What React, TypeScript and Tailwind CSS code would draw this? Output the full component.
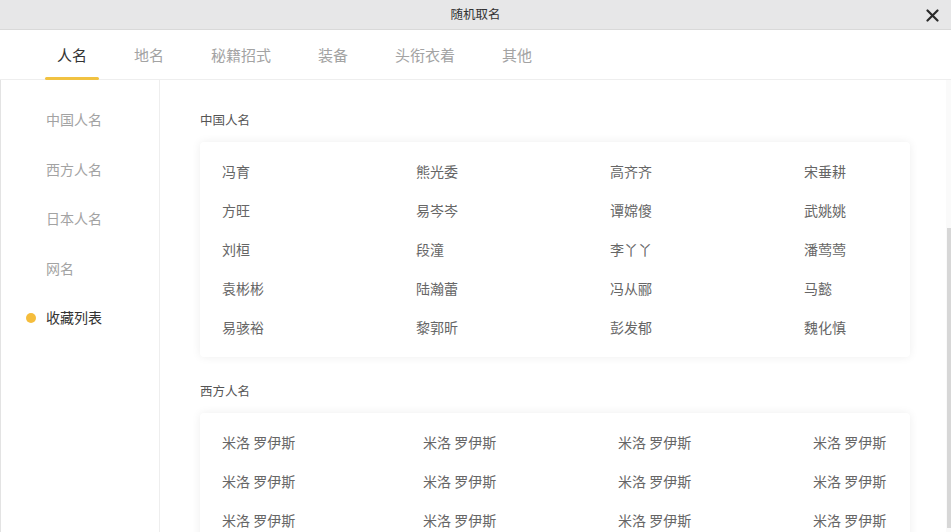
import React from "react";

const tabs = ["人名", "地名", "秘籍招式", "装备", "头衔衣着", "其他"];
const sideItems = ["中国人名", "西方人名", "日本人名", "网名", "收藏列表"];
const cnNames = [
  ["冯育", "熊光委", "高齐齐", "宋垂耕"],
  ["方旺", "易岑岑", "谭嫦傻", "武姚姚"],
  ["刘桓", "段潼", "李丫丫", "潘莺莺"],
  ["袁彬彬", "陆瀚蕾", "冯从郦", "马懿"],
  ["易骇裕", "黎郭昕", "彭发郁", "魏化慎"],
];
const westRows = [0, 1, 2, 3];

export default function App() {
  return (
    <div
      className="w-[951px] h-[532px] overflow-hidden bg-white flex flex-col text-[#333]"
      style={{ fontFamily: '"Noto Sans CJK SC", "Noto Sans", sans-serif' }}
    >
      {/* title bar */}
      <div className="h-[30px] shrink-0 bg-[#e7e7e8] border-b border-[#d9d9d9] flex items-center relative">
        <div className="flex-1 text-center text-[12.5px] text-[#333] leading-none">随机取名</div>
        <div className="absolute right-[12px] top-[8.5px] w-[13px] h-[13px]">
          <svg viewBox="0 0 13 13" width="13" height="13">
            <path d="M1.5 1.5 L11.5 11.5 M11.5 1.5 L1.5 11.5" stroke="#2b2b2b" strokeWidth="2.2" strokeLinecap="round" />
          </svg>
        </div>
      </div>

      {/* tabs */}
      <div className="h-[50px] shrink-0 border-b border-[#eeeeee] flex pl-[45px] gap-[23px]">
        {tabs.map((t, i) => (
          <div
            key={t}
            className={
              "relative h-full flex items-center pt-[2px] px-[12px] text-[15px] " +
              (i === 0 ? "text-[#333]" : "text-[#a3a3a3]")
            }
          >
            {t}
            {i === 0 && (
              <div className="absolute left-0 right-0 bottom-[-1px] h-[3px] rounded-[2px] bg-[#f1c241]" />
            )}
          </div>
        ))}
      </div>

      {/* body */}
      <div className="flex-1 flex min-h-0">
        <div className="w-[160px] shrink-0 border-r border-[#eeeeee] border-l border-l-[#e3e3e3] pt-[15px]">
          {sideItems.map((s, i) => (
            <div key={s} className="h-[49.5px] flex items-center pl-[25px]">
              <div className="w-[20px] flex items-center">
                {i === 4 && <div className="w-[10px] h-[10px] rounded-full bg-[#f5bd3c]" />}
              </div>
              <span className={"text-[14px] " + (i === 4 ? "text-[#333]" : "text-[#a3a3a3]")}>{s}</span>
            </div>
          ))}
        </div>

        <div className="flex-1 relative overflow-hidden pl-[40px] pt-[30px]">
          <div className="w-[710px]">
            <div className="h-[20px] flex items-center text-[12.5px] text-[#555] mb-[12px]">中国人名</div>
            <div className="bg-white rounded-[4px] shadow-[0_0_10px_rgba(0,0,0,0.07)] px-[22px] py-[10px]">
              {cnNames.map((row, ri) => (
                <div key={ri} className="h-[39px] grid grid-cols-[194px_194px_194px_84px] items-center">
                  {row.map((n) => (
                    <div key={n} className="text-[14px] text-[#666]">{n}</div>
                  ))}
                </div>
              ))}
            </div>

            <div className="h-[20px] flex items-center text-[12.5px] text-[#555] mt-[24px] mb-[12px]">西方人名</div>
            <div className="bg-white rounded-[4px] shadow-[0_0_10px_rgba(0,0,0,0.07)] px-[22px] py-[10px]">
              {westRows.map((r) => (
                <div key={r} className="h-[39px] grid grid-cols-[201px_195px_195px_75px] items-center">
                  {[0, 1, 2, 3].map((c) => (
                    <div key={c} className="text-[14px] text-[#666] whitespace-nowrap">米洛 罗伊斯</div>
                  ))}
                </div>
              ))}
            </div>
          </div>

          {/* scrollbar */}
          <div className="absolute right-0 top-0 bottom-0 w-[5px] bg-[#fafafa]">
            <div className="absolute left-[1px] right-0 top-[148px] h-[300px] bg-[#d7d7d7]" />
          </div>
        </div>
      </div>
    </div>
  );
}
